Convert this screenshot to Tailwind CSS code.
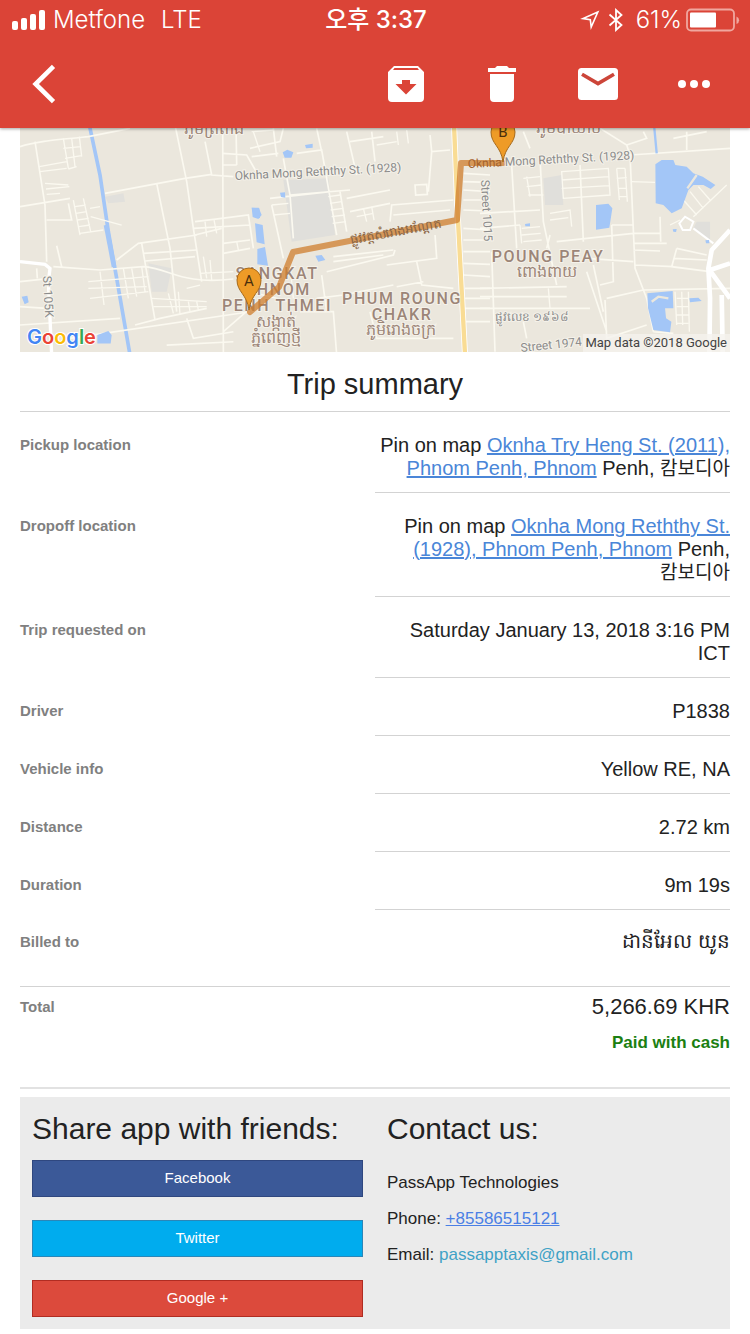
<!DOCTYPE html>
<html lang="en">

<head>
    <meta charset="UTF-8">
    <meta name="viewport" content="width=device-width, initial-scale=1.0">
    <title>Trip summary</title>
    <script src="https://cdn.jsdelivr.net/npm/@tailwindcss/browser@4"></script>
</head>

<body class="min-h-screen bg-white text-[#222] font-['Liberation_Sans','Noto_Sans_CJK_KR',sans-serif]">
    <header class="relative z-10 bg-[#db4437] text-white shadow-[0_1px_3px_rgba(0,0,0,0.35)]">
        <!-- status bar -->
        <div class="grid h-10 grid-cols-[1fr_auto_1fr] items-center pl-3 pr-[10px] text-[24px] leading-10 font-['Inter','Noto_Sans_CJK_KR',sans-serif]">
            <div class="flex items-center gap-2 font-light">
                <svg class="h-5 w-[33px]" viewBox="0 0 33 20" fill="currentColor" aria-hidden="true">
                    <rect x="0" y="11" width="6" height="9" rx="2" />
                    <rect x="9" y="8" width="6" height="12" rx="2" />
                    <rect x="18" y="4" width="6" height="16" rx="2" />
                    <rect x="27" y="0" width="6" height="20" rx="2" />
                </svg>
                <span>Metfone</span>
                <span class="ml-2">LTE</span>
            </div>
            <div class="font-medium">오후 3:37</div>
            <div class="flex items-center justify-end font-light">
                <svg class="mr-2 h-5 w-5" viewBox="0 0 20 20" fill="none" stroke="currentColor" stroke-width="1.600" stroke-linejoin="miter" aria-hidden="true">
                    <path d="M17.800 2 L3 8.600 L10.300 9.600 L11.200 17 Z" />
                </svg>
                <svg class="mr-3 h-6 w-4" viewBox="0 0 16 24" fill="none" stroke="currentColor" stroke-width="1.800" aria-hidden="true">
                    <path d="M1.500 6.500 L13.500 17 L8 22 V2 L13.500 7 L1.500 17.500" />
                </svg>
                <span class="mr-1">61%</span>
                <svg class="h-6 w-[54px]" viewBox="0 0 54 24" fill="none" aria-hidden="true">
                    <rect x="1" y="1.500" width="47" height="21" rx="4" stroke="#f0a79f" stroke-width="1.800" />
                    <rect x="4" y="4.500" width="26" height="15" rx="1" fill="white" />
                    <path d="M50.500 8.500 a4 4 0 0 1 0 7.500 z" fill="#f0a79f" />
                </svg>
            </div>
        </div>
        <!-- mail actions -->
        <nav class="flex h-[88px] items-center pl-8 pr-2">
            <button type="button" class="mr-auto" aria-label="Back">
                <svg class="h-10 w-6" viewBox="0 0 24 40" fill="none" stroke="currentColor" stroke-width="4.600">
                    <path d="M21.500 2.300 L3.600 20 L21.500 37.700" />
                </svg>
            </button>
            <button type="button" class="flex w-24 justify-center" aria-label="Archive">
                <svg class="h-9 w-9" viewBox="0 0 36 36" fill="currentColor">
                    <path fill-rule="evenodd" d="M6 0 H30 L36 6 V32 a4 4 0 0 1 -4 4 H4 a4 4 0 0 1 -4 -4 V6 Z M6.500 2 L5 4 H31 L29.500 2 Z M14 14 V18 H7.500 L18 28.500 L28.500 18 H22 V14 Z" />
                </svg>
            </button>
            <button type="button" class="flex w-24 justify-center" aria-label="Delete">
                <svg class="h-9 w-7" viewBox="0 0 28 36" fill="currentColor">
                    <path d="M0 2 H7 L9 0 H19 L21 2 H28 V6 H0 Z M2 8 H26 V32 a4 4 0 0 1 -4 4 H6 a4 4 0 0 1 -4 -4 Z" />
                </svg>
            </button>
            <button type="button" class="flex w-24 justify-center" aria-label="Mark unread">
                <svg class="h-8 w-10" viewBox="0 0 40 32">
                    <rect width="40" height="32" rx="3.500" fill="white" />
                    <path d="M4 6.200 L20 15.600 L36 6.200" fill="none" stroke="#cc4539" stroke-width="3.600" />
                </svg>
            </button>
            <button type="button" class="flex w-24 justify-center" aria-label="More">
                <svg class="h-2 w-8" viewBox="0 0 32 8" fill="currentColor">
                    <circle cx="4" cy="4" r="4" />
                    <circle cx="16" cy="4" r="4" />
                    <circle cx="28" cy="4" r="4" />
                </svg>
            </button>
        </nav>
    </header>

    <main class="mx-5">
        <!-- route map -->
        <svg class="block w-full" viewBox="20 128 710 224" role="img" aria-label="Trip route from A to B">
            <rect x="20" y="128" width="710" height="224" fill="#ebe7dd" />

            <!-- west side -->
            <g transform="translate(20 125) scale(.3334)" fill="none" stroke="#fbf9f0" stroke-width="5">
                <path fill="#e1e0dc" stroke="none" d="M385 415 L455 430 L440 500 L395 500 Z M255 215 L310 205 L315 230 L265 235 Z" />
                <path stroke="#a3c6f7" stroke-width="11" d="M208 0 L240 150 L265 320 L290 460 L330 690" />
                <path stroke="#a3c6f7" stroke-width="14" d="M258 300 L282 425" />
                <path d="M0 65 C40 50 100 45 205 35 L330 10 M45 50 L75 240 L80 410 M0 245 L150 220 M255 205 L495 160 L575 148 M465 0 L500 170 L520 310 L545 470 M555 50 L575 150 L640 155 M608 0 L610 690 M410 175 L450 370 L470 560 M290 405 L355 355 L530 330 M365 355 L405 585 M80 285 L155 285 L145 235" />
                <path d="M0 470 L90 460 M100 425 L240 435 L370 425 C450 430 480 480 640 462 M110 362 L125 425 M50 430 L52 460 M525 290 L605 280 L685 270 L700 370 M525 330 L605 310 M520 310 L690 300 M610 355 L690 345 M610 385 L690 370 M370 385 L530 375 M375 408 L525 395 M0 545 L80 550 M0 600 L300 580 M150 640 L690 560 M345 600 L420 580 L560 550 M610 620 L690 550 M500 580 L520 640 L640 620 M440 660 L640 650 M608 85 L680 90 L720 160 M608 120 L650 120 M648 10 L650 120" />
                <path stroke-width="4" d="M130 40 L145 130 M155 40 L165 125 M178 35 L185 95 M130 70 L182 65 M135 100 L184 92 M145 132 L170 125 M58 125 L140 110 M60 140 L140 130 M75 175 L145 180 M78 192 L148 185 M80 208 L120 205 M160 225 L180 330 M190 220 L212 320 M165 245 L197 240 M168 265 L200 260 M172 285 L206 280 M176 305 L210 300 M180 325 L250 315 M210 250 L240 245 M212 275 L305 300 M205 470 L385 455 M205 490 L380 485 M210 520 L385 500 M240 440 L252 540 M310 430 L325 520 M335 430 L350 515 M365 425 L375 500 M550 395 L560 460 M570 405 L575 465 M540 445 L640 440 M395 520 L560 530 M400 545 L560 545 M445 505 L460 565 M475 500 L480 570 M500 490 L540 480 M505 530 L510 560 M530 530 L535 555 M555 290 L560 335 M582 285 L590 325 M650 350 L655 375 M700 20 L720 80" />
                <path stroke="#ffffff" stroke-width="10" d="M0 410 L75 418 L90 430 L85 470 L95 690" />
                <path fill="#a3c6f7" stroke="none" d="M5 515 L22 512 L26 532 L14 538 Z M232 630 L265 618 L275 630 L272 655 L232 655 Z M695 248 L718 250 L720 280 L702 275 Z" />
            </g>

            <!-- centre -->
            <g transform="translate(250 125) scale(.3334)" fill="none" stroke="#fbf9f0" stroke-width="5">
                <path fill="#e0dfdb" stroke="none" d="M100 165 L235 160 L255 330 L125 350 Z" />
                <path d="M0 70 L90 50 L100 10 M5 95 L85 85 M70 10 L80 95 M100 100 L120 210 L130 340 M140 85 L215 75 L260 330 M200 10 L215 80 M290 20 L320 150 M300 50 L400 35 M365 20 L375 110 M540 30 L545 80 L600 75 M545 80 L535 200 M60 220 L240 200 M65 240 L100 400 M120 210 L300 195 M270 200 L290 320 M290 220 L420 195 M300 260 L420 235 M495 180 L530 178 L532 208 L497 210 Z M420 290 L425 240 L610 225 M430 270 L600 255 M230 440 L430 390 L435 375 M250 395 L430 375 M250 410 L400 390 M555 330 L560 400 L410 420 M500 410 L515 480 L610 490 M440 485 L520 470 M200 520 L280 510 L430 480 M150 560 L250 560 L260 690 M215 450 L230 560 M360 560 L380 640 L610 640" />
                <path stroke-width="4" d="M235 215 L270 210 M240 235 L275 230 M242 255 L280 250 M245 275 L285 270 M248 295 L288 290 M340 250 L350 290 M365 245 L372 285 M320 275 L370 265 M0 500 L120 530 M120 420 L130 520 M440 20 L445 60 M470 15 L475 55 M380 60 L440 50 M5 20 L70 15 M65 240 L115 235 M70 270 L120 265" />
                <path d="M640 145 L720 150 M640 170 L720 172 M640 195 L720 200 M640 225 L720 225 M640 255 L720 258 M640 310 L720 315 M640 345 L720 345 M640 380 L720 380 M640 415 L720 418 M640 450 L720 455 M645 490 L720 490 M645 520 L720 520 M645 550 L720 550 M645 590 L720 590" />
                <path stroke="#ffffff" stroke-width="18" d="M612 0 L622 250 L645 690" />
                <path stroke="#f9dc94" stroke-width="13" d="M612 0 L622 250 L645 690" />
                <path fill="#a3c6f7" stroke="none" d="M98 82 L112 74 L130 82 L124 98 L104 98 Z M165 60 L188 56 L188 68 L168 70 Z M5 248 L26 248 L35 270 L25 282 L8 276 Z M15 295 L38 300 L44 358 L20 352 Z M22 372 L45 366 L54 422 L22 418 Z M90 203 L105 202 L106 218 L93 216 Z M196 392 L215 390 L226 405 L205 410 Z" />
            </g>

            <!-- east side -->
            <g transform="translate(480 125) scale(.3334)" fill="none" stroke="#fbf9f0" stroke-width="5">
                <path fill="#e0dfdb" stroke="none" d="M190 160 L245 150 L250 240 L195 240 Z M650 290 L690 290 L690 350 L640 310 Z" />
                <path d="M95 120 L110 370 M35 380 L45 680 M0 265 L180 255 M180 100 L190 290 L230 480 M300 120 L310 350 M450 90 L465 430 L500 520 L520 620 M450 90 L750 70 M230 350 L460 325 L540 325 M540 275 L542 350 M395 300 L460 300 M395 300 L400 470 L360 480 M0 310 L120 300 M200 370 L210 330 M460 355 L560 355 M460 375 L540 378 M465 420 L580 425 M590 370 L575 425 L690 440 M590 370 L680 390 M580 400 L680 405 M320 400 L460 410 M490 495 L750 490 M380 520 L490 495 M320 440 L380 620 M340 420 L370 560 M0 490 L260 485 M0 515 L260 515 M0 550 L330 550 M130 590 L140 640 M375 525 L380 640 L500 600 M520 620 L580 625 M130 20 L150 70 M620 20 L620 75 M580 40 L680 20 M360 10 L440 60 L450 90 M440 60 L500 40 L490 20" />
                <path stroke-width="4" d="M245 140 L385 130 L390 210 L250 220 Z M245 165 L385 155 M245 190 L388 182 M130 160 L180 155 M140 185 L185 180 M145 210 L190 210 M140 155 L150 215 M410 130 L435 130 M410 160 L440 158 M415 190 L440 190 M415 215 L442 215 M410 130 L418 225 M435 130 L442 230 M455 170 L525 172 M125 310 L180 305 M125 330 L182 325 M130 350 L185 345 M120 300 L125 355 M210 265 L270 255 L275 305 M210 285 L265 278 M585 500 L590 600 M605 500 L608 600 M590 520 L625 520 M590 545 L625 545 M590 570 L625 570 M590 595 L625 595 M625 500 L628 620 M205 490 L210 550 M610 225 L650 270 M630 200 L670 250 M655 185 L690 225 M740 180 L640 275 M570 300 L600 285" />
                <path stroke="#ffffff" stroke-width="6" d="M598 295 L615 275 L640 290 L630 315 L608 315 Z M640 310 L700 355" />
                <path stroke="#ffffff" stroke-width="14" d="M750 315 L695 375 L685 430 L690 520 L688 690 M690 435 L750 415 M692 440 L750 520 M725 510 L728 690" />
                <path stroke="#a3c6f7" stroke-width="7" d="M522 0 L530 85" />
                <path fill="#a3c6f7" stroke="none" d="M526 118 L545 105 L580 105 L586 120 L620 125 L640 145 L668 155 L706 180 L692 192 L670 180 L640 180 L625 195 L605 250 L575 265 L550 240 L527 235 Z M348 240 L385 236 L397 250 L388 308 L348 314 Z M502 505 L578 498 L580 550 L555 550 L558 580 L574 590 L570 622 L520 615 L504 550 Z M628 520 L655 518 L665 528 L630 532 Z M135 297 L150 295 L150 304 L136 304 Z M578 313 L590 312 L588 321 L580 320 Z M676 346 L687 345 L688 355 L678 355 Z" />
                <path stroke="#ebe7dd" stroke-width="7" d="M515 530 L535 515 L565 520 M622 190 L650 150" />
            </g>

            <!-- labels -->
            <g class="font-['Roboto','Noto_Sans',sans-serif]" fill="#8b8b8b" stroke="#f5f2ea" stroke-width="2" paint-order="stroke" font-size="12">
                <text transform="translate(235 180) rotate(-3)">Oknha Mong Reththy St. (1928)</text>
                <text transform="translate(43 276) rotate(87)">St 105K</text>
                <text transform="translate(481 180) rotate(87)">Street 1015</text>
                <text transform="translate(521 352) rotate(-6)">Street 1974</text>
                <text x="495" y="321">ផ្លូវលេខ ១៩៦៨</text>
            </g>
            <g class="font-['Roboto','Noto_Sans',sans-serif] font-medium" fill="#9c8578" stroke="#f5f2ea" stroke-width="2" paint-order="stroke" font-size="16" text-anchor="middle">
                <g class="tracking-widest">
                    <text x="277" y="279">SANGKAT</text>
                    <text x="278" y="295">PHNOM</text>
                    <text x="277" y="311">PENH THMEI</text>
                    <text x="402" y="304">PHUM ROUNG</text>
                    <text x="402" y="320">CHAKR</text>
                    <text x="548" y="262">POUNG PEAY</text>
                </g>
                <text x="276" y="327">សង្កាត់</text>
                <text x="276" y="343">ភ្នំពេញថ្មី</text>
                <text x="401" y="335">ភូមិរោងចក្រ</text>
                <text x="547" y="277">ពោងពាយ</text>
                <text x="214" y="134">ភូមិត្រពាំង</text>
                <text x="568" y="133">ភូមិបាយាប</text>
            </g>

            <!-- route -->
            <path d="M250 312 L279 287 L293 252 L457 220 L461 163 L503 163" fill="none" stroke="#cf7d2c" stroke-opacity=".75" stroke-width="6" stroke-linejoin="round" stroke-linecap="round" />
            <text class="font-['Noto_Sans',sans-serif]" transform="translate(351 244) rotate(-10)" font-size="13" fill="#8a6544">ផ្លូវវត្តសំរោងអណ្តែត</text>
            <g class="font-['Roboto',sans-serif]" font-size="12">
                <text transform="translate(468 168) rotate(-3)" fill="#a4622b">Oknha</text>
                <text transform="translate(505 166) rotate(-3)" fill="#8b8b8b" stroke="#f5f2ea" stroke-width="2" paint-order="stroke">Mong Reththy St. (1928)</text>
            </g>

            <!-- pins -->
            <g class="font-['Roboto',sans-serif]" font-size="15" text-anchor="middle">
                <path d="M249 310 C247 294 237 292 237 280 A12 12 0 0 1 261 280 C261 292 251 294 249 310 Z" fill="#ee9b27" stroke="#a66a1c" />
                <text x="249" y="286" fill="#4b2f0c">A</text>
                <path d="M503 162 C501 146 491 144 491 132 A12 12 0 0 1 515 132 C515 144 505 146 503 162 Z" fill="#ee9b27" stroke="#a66a1c" />
                <text x="503" y="137" fill="#4b2f0c">B</text>
            </g>

            <!-- attribution -->
            <text class="font-['Inter',sans-serif] font-semibold" x="27" y="344" font-size="20" stroke="#ffffff" stroke-width="2" paint-order="stroke"><tspan fill="#4285f4">G</tspan><tspan fill="#ea4335">o</tspan><tspan fill="#fbbc05">o</tspan><tspan fill="#4285f4">g</tspan><tspan fill="#34a853">l</tspan><tspan fill="#ea4335">e</tspan></text>
            <rect x="583" y="334" width="147" height="18" fill="#f5f3ee" fill-opacity=".8" />
            <text class="font-['Roboto',sans-serif]" x="727" y="347" font-size="13" text-anchor="end" fill="#444">Map data ©2018 Google</text>
        </svg>

        <h1 class="border-b border-[#d3d3d3] pt-[14px] pb-[9px] text-center text-[29px] leading-9">Trip summary</h1>

        <table class="w-full table-fixed border-separate border-spacing-0 break-keep text-[20px] leading-[23px]">
            <tbody class="[&_th]:pt-[21px] [&_th]:text-left [&_th]:align-top [&_th]:text-[15px] [&_th]:text-[#808080] [&_td]:border-b [&_td]:border-[#d3d3d3] [&_td]:pt-[22px] [&_td]:pb-3 [&_td]:text-right">
                <tr>
                    <th scope="row">Pickup location</th>
                    <td>Pin on map <a href="#" class="text-[#4a86d8] underline">Oknha Try Heng St. (2011), Phnom Penh, Phnom</a> Penh, <span class="text-[19px]">캄보디아</span></td>
                </tr>
                <tr>
                    <th scope="row">Dropoff location</th>
                    <td>Pin on map <a href="#" class="text-[#4a86d8] underline">Oknha Mong Reththy St. (1928), Phnom Penh, Phnom</a> Penh, <span class="text-[19px]">캄보디아</span></td>
                </tr>
                <tr>
                    <th scope="row">Trip requested on</th>
                    <td>Saturday January 13, 2018 3:16 PM ICT</td>
                </tr>
                <tr>
                    <th scope="row">Driver</th>
                    <td>P1838</td>
                </tr>
                <tr>
                    <th scope="row">Vehicle info</th>
                    <td>Yellow RE, NA</td>
                </tr>
                <tr>
                    <th scope="row">Distance</th>
                    <td>2.72 km</td>
                </tr>
                <tr>
                    <th scope="row">Duration</th>
                    <td>9m 19s</td>
                </tr>
            </tbody>
            <tbody>
                <tr>
                    <th scope="row" class="border-b border-[#d3d3d3] pt-5 text-left align-top text-[15px] text-[#808080]">Billed to</th>
                    <td class="border-b border-[#d3d3d3] pt-5 pb-[33px] text-right">ដានីអែល យូន</td>
                </tr>
            </tbody>
            <tfoot>
                <tr>
                    <th scope="row" class="border-b-2 border-[#e2e2e2] pt-2 text-left align-top text-[15px] text-[#808080]">Total</th>
                    <td class="border-b-2 border-[#e2e2e2] pt-2 pb-[33px] text-right">
                        <p class="text-[22px]">5,266.69 KHR</p>
                        <p class="mt-[13px] text-[17px] font-bold text-[#1c8012]">Paid with cash</p>
                    </td>
                </tr>
            </tfoot>
        </table>

        <footer class="mt-2 mb-[5px] grid grid-cols-2 bg-[#ebebeb] py-3">
            <section class="px-3">
                <h2 class="text-[30px] leading-10">Share app with friends:</h2>
                <div class="mt-[11px] flex flex-col gap-[23px] text-[15px] text-white">
                    <button type="button" class="h-[37px] border border-[#2f477f] bg-[#3b5998]">Facebook</button>
                    <button type="button" class="h-[37px] border border-[#2a86b8] bg-[#00acee]">Twitter</button>
                    <button type="button" class="h-[37px] border border-[#b02c22] bg-[#dc4a3c]">Google +</button>
                </div>
            </section>
            <section class="px-3">
                <h2 class="text-[30px] leading-10">Contact us:</h2>
                <div class="mt-4 text-[17px] leading-9">
                    <p>PassApp Technologies</p>
                    <p>Phone: <a href="tel:+85586515121" class="text-[#4a7fe5] underline">+85586515121</a></p>
                    <p>Email: <a href="mailto:passapptaxis@gmail.com" class="text-[#3fa2c6]">passapptaxis@gmail.com</a></p>
                </div>
            </section>
        </footer>
    </main>
</body>

</html>
